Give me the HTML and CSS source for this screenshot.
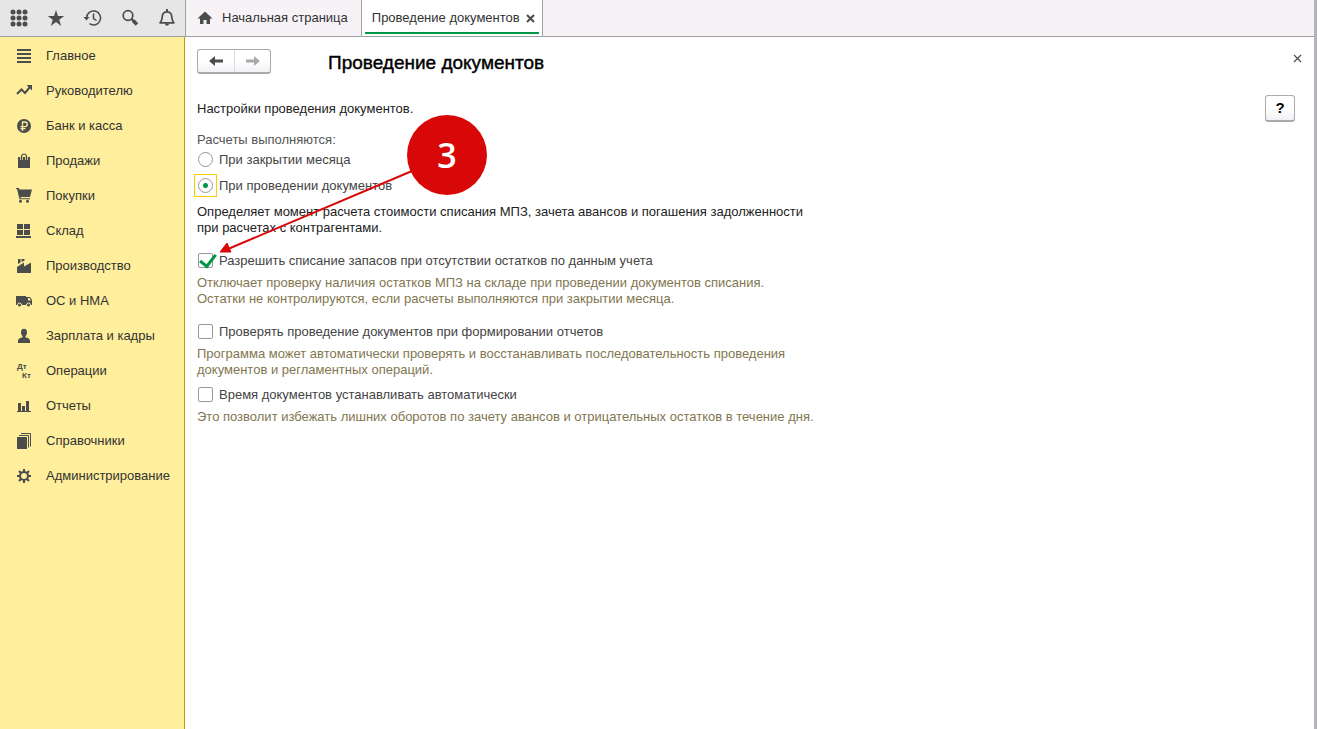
FILE: index.html
```html
<!DOCTYPE html>
<html lang="ru">

<head>
    <meta charset="utf-8">
    <title>Проведение документов</title>
    <link rel="stylesheet" href="styles.css">
</head>

<body>
    <header class="topbar">
        <div class="tools">
            <button class="tool" aria-label="Меню">
                <svg width="20" height="20" viewBox="0 0 20 20"><g fill="#4a4d4b"><circle cx="4" cy="4" r="2.5"/><circle cx="10" cy="4" r="2.5"/><circle cx="16" cy="4" r="2.5"/><circle cx="4" cy="10" r="2.5"/><circle cx="10" cy="10" r="2.5"/><circle cx="16" cy="10" r="2.5"/><circle cx="4" cy="16" r="2.5"/><circle cx="10" cy="16" r="2.5"/><circle cx="16" cy="16" r="2.5"/></g></svg>
            </button>
            <button class="tool" aria-label="Избранное">
                <svg width="20" height="20" viewBox="0 0 20 20"><path fill="#4a4d4b" d="M10 2l2 6h6.200l-5 3.700 2 6.300-5.200-3.900-5.200 3.900 2-6.300-5-3.700h6.200z"/></svg>
            </button>
            <button class="tool" aria-label="История">
                <svg width="20" height="20" viewBox="0 0 20 20" fill="none" stroke="#4a4d4b" stroke-width="1.500"><path d="M3.500 10a7 7 0 1 1 3 5.700"/><path d="M10.500 5.500v5l3 2"/><path d="M0.500 9h6l-3 3.500z" fill="#4a4d4b" stroke="none"/></svg>
            </button>
            <button class="tool" aria-label="Поиск">
                <svg width="20" height="20" viewBox="0 0 20 20" fill="none" stroke="#4a4d4b"><circle cx="8" cy="7.500" r="4.800" stroke-width="1.700"/><path d="M11.500 11l2 2" stroke-width="2"/><path d="M13 12.500l4 4" stroke-width="3.500"/></svg>
            </button>
            <button class="tool" aria-label="Уведомления">
                <svg width="20" height="20" viewBox="0 0 20 20"><path d="M3 14.800c2.500-2 1.800-5 2.600-8 .6-2 2-3 4.400-3s3.800 1 4.400 3c.8 3 .1 6 2.600 8z" fill="none" stroke="#4a4d4b" stroke-width="1.700" stroke-linejoin="round"/><path d="M9 1h2v2.500h-2zM8 15.500h4c0 3-4 3-4 0z" fill="#4a4d4b"/></svg>
            </button>
        </div>
        <nav class="tabs">
            <a href="#" class="tab">
                <svg width="16" height="16" viewBox="0 0 16 16"><path fill="#4a4d4b" d="M8 1.500l7.500 7h-2.500v5.500h-3.500v-4h-3v4h-3.500v-5.500h-2.500z"/></svg>
                Начальная страница
            </a>
            <div class="tab active">
                <a href="#">Проведение документов</a>
                <button class="tabClose" aria-label="Закрыть вкладку">
                    <svg width="9" height="9" viewBox="0 0 9 9"><path d="M1 1l7 7M8 1l-7 7" stroke="#4a4d4b" stroke-width="2"/></svg>
                </button>
            </div>
        </nav>
    </header>

    <div class="layout">
        <nav class="sidebar">
            <a href="#"><svg viewBox="0 0 16 16"><path d="M1 1h14v2h-14zM1 5h14v2h-14zM1 9h14v2h-14zM1 13h14v2h-14z"/></svg>Главное</a>
            <a href="#"><svg viewBox="0 0 16 16"><path d="M1 11l4.500-4.500 3.500 3.500 5-6" fill="none" stroke="#4a4d4b" stroke-width="2"/><path d="M10.500 2h5.500v5.500z"/></svg>Руководителю</a>
            <a href="#"><svg viewBox="0 0 16 16"><circle cx="8" cy="8" r="7"/><path d="M6.500 13v-9h2.500a2.200 2.200 0 0 1 0 4.600h-4.500M4.500 10.700h5" fill="none" stroke="#ffee9b" stroke-width="1.300"/></svg>Банк и касса</a>
            <a href="#"><svg viewBox="0 0 16 16"><path d="M2 4h12v11h-12z"/><path d="M5.500 7v-3c0-4 5-4 5 0v3" fill="none" stroke="#ffee9b" stroke-width="2.600"/><path d="M5.500 7v-3c0-4 5-4 5 0v3" fill="none" stroke="#4a4d4b" stroke-width="1.200"/></svg>Продажи</a>
            <a href="#"><svg viewBox="0 0 16 16"><path d="M0 0h3l.5 1.500h12.500l-2 7.500h-9.500l.3 1.300h9.200v1h-10.500l-2.500-10.300h-1z"/><circle cx="4.500" cy="13.300" r="1.500"/><circle cx="11.500" cy="13.300" r="1.500"/></svg>Покупки</a>
            <a href="#"><svg viewBox="0 0 16 16"><path d="M1 1h6v5h-6zM8 1h6v5h-6zM1 7h6v5h-6zM8 7h6v5h-6zM0 13h15v2h-15z"/></svg>Склад</a>
            <a href="#"><svg viewBox="0 0 16 16"><path d="M1 15v-6l7-4.500v4l7-4v10.500zM2 1h2.500v3.500l-2.500 1.500zM5.500 1h3v1.500l-3 1.500z"/></svg>Производство</a>
            <a href="#"><svg viewBox="0 0 16 16"><path d="M0 3h10v9h-10zM11 4h3l2 3v5h-6v-8z"/><path d="M12 5h1.500l1.500 2.500h-3z" fill="#ffee9b"/><circle cx="3.500" cy="12" r="2" stroke="#ffee9b"/><circle cx="12.500" cy="12" r="2" stroke="#ffee9b"/></svg>ОС и НМА</a>
            <a href="#"><svg viewBox="0 0 16 16"><ellipse cx="8" cy="4.500" rx="3" ry="3.700"/><path d="M2 15v-2c0-2 1.500-3 4-3.500h4c2.500.5 4 1.500 4 3.500v2zM6.500 7h3v4h-3z"/></svg>Зарплата и кадры</a>
            <a href="#"><svg viewBox="0 0 16 16" class="dtkt"><text x="1" y="6">Дт</text><text x="6" y="15">Кт</text></svg>Операции</a>
            <a href="#"><svg viewBox="0 0 16 16"><path d="M1 13h14v1h-14zM2 5h3v8h-3zM6 8h3v5h-3zM10 3h3v10h-3z"/></svg>Отчеты</a>
            <a href="#"><svg viewBox="0 0 16 16"><path d="M1 4h10v12h-10z"/><path d="M3 2.500h9.500v12M5 .5h9.500v13" fill="none" stroke="#4a4d4b"/></svg>Справочники</a>
            <a href="#"><svg viewBox="0 0 16 16"><circle cx="8" cy="8" r="4" fill="none" stroke="#4a4d4b" stroke-width="2"/><path d="M8 1v3M8 12v3M1 8h3M12 8h3M3 3l2 2M11 11l2 2M13 3l-2 2M5 11l-2 2" stroke="#4a4d4b" stroke-width="2"/></svg>Администрирование</a>
        </nav>

        <main class="content">
            <div class="titleRow">
                <div class="history">
                    <button aria-label="Назад"><svg width="16" height="12" viewBox="0 0 16 12"><path fill="#4a4d4b" d="M1 6l6-5v3.500h8v3h-8v3.500z"/></svg></button>
                    <button aria-label="Вперед"><svg width="16" height="12" viewBox="0 0 16 12"><path fill="#aaaaaa" d="M15 6l-6-5v3.500h-8v3h8v3.500z"/></svg></button>
                </div>
                <h1>Проведение документов</h1>
                <button class="formClose" aria-label="Закрыть"><svg width="9" height="9" viewBox="0 0 9 9"><path d="M1 1l7 7M8 1l-7 7" stroke="#4a4d4b" stroke-width="1.200"/></svg></button>
            </div>

            <div class="body">
                <form class="settings">
                    <p class="intro">Настройки проведения документов.</p>

                    <fieldset>
                        <legend>Расчеты выполняются:</legend>
                        <div class="option"><input type="radio" name="calc" id="calcMonth"><label for="calcMonth">При закрытии месяца</label></div>
                        <div class="option"><input type="radio" name="calc" id="calcDoc" class="focused" checked><label for="calcDoc">При проведении документов</label></div>
                    </fieldset>
                    <p class="info">Определяет момент расчета стоимости списания МПЗ, зачета авансов и погашения задолженности<br>при расчетах с контрагентами.</p>

                    <div class="option"><input type="checkbox" id="stock" checked><label for="stock">Разрешить списание запасов при отсутствии остатков по данным учета</label></div>
                    <p class="hint wide">Отключает проверку наличия остатков МПЗ на складе при проведении документов списания.<br>Остатки не контролируются, если расчеты выполняются при закрытии месяца.</p>

                    <div class="option"><input type="checkbox" id="check"><label for="check">Проверять проведение документов при формировании отчетов</label></div>
                    <p class="hint">Программа может автоматически проверять и восстанавливать последовательность проведения<br>документов и регламентных операций.</p>

                    <div class="option"><input type="checkbox" id="time"><label for="time">Время документов устанавливать автоматически</label></div>
                    <p class="hint">Это позволит избежать лишних оборотов по зачету авансов и отрицательных остатков в течение дня.</p>
                </form>
                <button class="help" aria-label="Справка">?</button>
            </div>

            <!-- step marker over the form -->
            <svg class="marker" width="270" height="142" viewBox="0 0 270 142">
                <path d="M192 57L8 135" stroke="#d90808" stroke-width="2"/>
                <path d="M0 138l7-9 4 9z" fill="#d90808" stroke="#d90808"/>
                <circle cx="227" cy="41" r="40" fill="#d90808"/>
                <text x="227" y="54">3</text>
            </svg>
        </main>
    </div>
</body>

</html>
```
FILE: styles.css
```css
* {
    box-sizing: border-box;
}

body {
    margin: 0;
    min-height: 100vh;
    display: flex;
    flex-direction: column;
    border-right: 3px solid #b4b4b8;
    background-color: #fff;
    color: #333;
    font: 13px/16px "Liberation Sans", Arial, sans-serif;
}

a {
    color: inherit;
    text-decoration: none;
}

button {
    padding: 0;
    border: none;
    background: none;
    font: inherit;
    display: flex;
    align-items: center;
    justify-content: center;
}

/* Top bar */

.topbar {
    display: flex;
    height: 37px;
    background-color: #f6f2f6;
    border-bottom: 1px solid #a0a0a0;
}

.tools {
    display: flex;
    width: 186px;
    background-color: #e6e6e6;
    border-right: 1px solid #a0a0a0;
}

.tool {
    flex: 1;
}

.tabs {
    display: flex;
}

.tab {
    display: flex;
    align-items: center;
    padding: 0 13px 0 11px;
    gap: 9px;
    border-right: 1px solid #a0a0a0;
}

.tab.active {
    position: relative;
    padding: 0 7px 0 10px;
    gap: 6px;
    background-color: #fff;
}

.tab.active::after {
    content: "";
    position: absolute;
    left: 3px;
    right: 3px;
    bottom: 2px;
    height: 2px;
    background-color: #009646;
}

/* Sections */

.layout {
    display: flex;
    flex: 1;
}

.sidebar {
    width: 185px;
    padding-top: 1px;
    background-color: #ffee9b;
    border-right: 1px solid #b8a000;
}

.sidebar a {
    display: flex;
    align-items: center;
    height: 35px;
    padding-left: 16px;
    gap: 14px;
}

.sidebar svg {
    width: 16px;
    height: 16px;
    fill: #4a4d4b;
}

.dtkt text {
    font-size: 8px;
    font-weight: bold;
}

/* Form */

.content {
    position: relative;
    flex: 1;
    padding: 12px 12px 0;
}

.titleRow {
    display: flex;
    align-items: flex-start;
    height: 26px;
}

.history {
    display: flex;
    height: 25px;
    border: 1px solid #aaa;
    border-bottom: 2px solid #aaa;
    border-radius: 3px;
    background: linear-gradient(#fff 50%, #f2f0f4);
}

.history button {
    width: 36px;
}

.history button + button {
    border-left: 1px solid #ddd;
}

h1 {
    flex: 1;
    margin: 0 0 0 57px;
    font-size: 19px;
    font-weight: normal;
    line-height: 28px;
    color: #000;
    -webkit-text-stroke: 0.4px #000;
}

.formClose {
    height: 18px;
}

.body {
    display: flex;
    justify-content: space-between;
    align-items: flex-start;
    padding: 20px 7px 0 0;
}

.settings {
    padding-top: 6px;
}

p {
    margin: 0;
}

.intro {
    margin-bottom: 15px;
    color: #222;
}

fieldset {
    margin: 0;
    padding: 0;
    border: none;
}

legend {
    padding: 0;
    margin-bottom: 4px;
    color: #555;
}

.option {
    display: flex;
    align-items: flex-start;
    gap: 6px;
    height: 16px;
    margin-bottom: 10px;
    color: #444;
}

.option input {
    appearance: none;
    position: relative;
    width: 15px;
    height: 15px;
    margin: 0 0 0 1px;
    border: 1px solid #999;
    background: #fff center no-repeat;
}

.option input[type=radio] {
    border-radius: 50%;
}

.option input[type=radio]:checked {
    background-image: radial-gradient(circle, #009646 2px, #fff 3px);
}

.option input.focused::after {
    content: "";
    position: absolute;
    inset: -5px;
    border: 1px solid #fc0;
}

.option input[type=checkbox] {
    border-radius: 2px;
}

.option input[type=checkbox]:checked::after {
    content: "";
    position: absolute;
    left: 4px;
    top: -3px;
    width: 7px;
    height: 13px;
    border: solid #009646;
    border-width: 0 3px 3px 0;
    transform: rotate(38deg);
}

.info {
    margin-bottom: 17px;
    color: #222;
}

.option:has([type=checkbox]) {
    margin-bottom: 6px;
}

.hint {
    margin-bottom: 9px;
    color: #827650;
}

.hint.wide {
    margin-bottom: 17px;
}

.help {
    width: 30px;
    height: 27px;
    border: 1px solid #aaa;
    border-bottom: 2px solid #aaa;
    border-radius: 3px;
    background: linear-gradient(#fff 50%, #f2f0f4);
    color: #000;
    font-size: 15px;
    font-weight: bold;
}

.marker {
    position: absolute;
    left: 35px;
    top: 77px;
    pointer-events: none;
}

.marker text {
    fill: #fff;
    font: 600 34px "Open Sans", sans-serif;
    text-anchor: middle;
}
```
